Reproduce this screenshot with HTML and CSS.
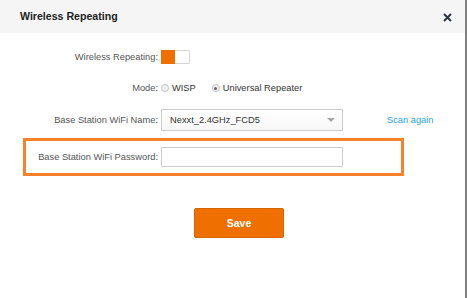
FILE: index.html
```html
<!DOCTYPE html>
<html lang="en">
<head>
    <meta charset="UTF-8">
    <meta name="viewport" content="width=device-width, initial-scale=1.0">
    <title>Wireless Repeating</title>
    <link rel="stylesheet" href="styles.css">
</head>
<body>
    <div class="dialog">
        <div class="dialog-header">
            <div class="dialog-title">Wireless Repeating</div>
            <svg class="close" width="9" height="9" viewBox="0 0 9 9">
                <path d="M1 1 L8 8 M8 1 L1 8" stroke="#2f3640" stroke-width="2" fill="none"/>
            </svg>
        </div>

        <div class="dialog-body">
            <div class="row row-switch">
                <div class="label">Wireless Repeating:</div>
                <div class="switch">
                    <span class="switch-on"></span>
                    <span class="switch-off"></span>
                </div>
            </div>

            <div class="row row-mode">
                <div class="label">Mode:</div>
                <span class="radio"></span>
                <span class="radio-text">WISP</span>
                <span class="radio checked"></span>
                <span class="radio-text">Universal Repeater</span>
            </div>

            <div class="row row-ssid">
                <div class="label">Base Station WiFi Name:</div>
                <div class="select">
                    <span>Nexxt_2.4GHz_FCD5</span>
                    <span class="caret"></span>
                </div>
                <a class="scan" href="#">Scan again</a>
            </div>

            <div class="row row-pass">
                <div class="label">Base Station WiFi Password:</div>
                <div class="input"></div>
            </div>

            <div class="actions">
                <button class="btn-save">Save</button>
            </div>
        </div>
    </div>
</body>
</html>
```

FILE: styles.css
```css
:root {
    --orange: #ef6f00;
    --highlight: #f8812a;
    --label: #555555;
    --text: #333333;
    --border: #cccccc;
}

body {
    margin: 0;
    background-color: #ffffff;
    font-family: 'Liberation Sans', Arial, sans-serif;
    font-size: 9.3px;
    color: var(--text);
}

.dialog {
    width: 465px;
    height: 298px;
    border-right: 2px solid #808080;
    background-color: #ffffff;
}

.dialog-header {
    display: flex;
    align-items: center;
    justify-content: space-between;
    height: 33px;
    padding: 0 13px 0 20px;
    background-color: #f5f5f5;
}

.dialog-title {
    font-size: 10.6px;
    font-weight: bold;
    color: #222222;
    margin-top: -1px;
}

.close {
    display: block;
    margin-top: 1px;
}

.dialog-body {
    padding-top: 17px;
}

.row {
    display: flex;
    align-items: center;
}

.label {
    width: 161px;
    padding-right: 3px;
    text-align: right;
    color: var(--label);
    white-space: nowrap;
    box-sizing: border-box;
}

.row-switch {
    height: 14px;
}

.switch {
    display: flex;
    width: 29px;
    height: 14px;
    border: 1px solid #d6d6d6;
    border-radius: 1px;
    box-sizing: border-box;
}

.switch-on {
    width: 14px;
    margin: -1px 0 -1px -1px;
    background-color: var(--orange);
}

.switch-off {
    flex: 1;
    background-color: #ffffff;
}

.row-mode {
    height: 14px;
    margin-top: 17px;
}

.radio {
    width: 8px;
    height: 8px;
    border: 1px solid #c4c4c4;
    border-radius: 50%;
    background-color: #f0f0f0;
    box-sizing: border-box;
    position: relative;
}

.radio.checked {
    margin-left: 16px;
}

.radio.checked::after {
    content: '';
    position: absolute;
    left: 1.5px;
    top: 1.5px;
    width: 3px;
    height: 3px;
    border-radius: 50%;
    background-color: #666666;
}

.radio-text {
    margin-left: 3px;
    color: var(--text);
}

.row-ssid {
    height: 22px;
    margin-top: 14px;
}

.select {
    display: flex;
    align-items: center;
    justify-content: space-between;
    width: 182px;
    height: 22px;
    padding: 0 4px 0 8px;
    border: 1px solid var(--border);
    background: linear-gradient(#ffffff, #f7f7f7);
    box-sizing: border-box;
    color: var(--text);
}

.caret {
    width: 0;
    height: 0;
    border-left: 4px solid transparent;
    border-right: 4px solid transparent;
    border-top: 4px solid #a8a8a8;
    margin-right: 3px;
}

.scan {
    margin-left: 44px;
    color: #2ba3e3;
    text-decoration: none;
}

.row-pass {
    height: 38px;
    width: 381px;
    margin: 7px 0 0 23px;
    border: 3px solid var(--highlight);
    box-sizing: border-box;
}

.row-pass .label {
    width: 135px;
}

.input {
    width: 182px;
    height: 20px;
    border: 1px solid var(--border);
    border-radius: 1px;
    box-sizing: border-box;
    background-color: #ffffff;
}

.actions {
    display: flex;
    justify-content: center;
    margin-top: 32px;
    padding-left: 13px;
}

.btn-save {
    width: 90px;
    height: 30px;
    border: 1px solid #d86400;
    border-radius: 2px;
    background-color: var(--orange);
    color: #ffffff;
    font-family: 'Liberation Sans', Arial, sans-serif;
    font-size: 10.5px;
    font-weight: bold;
}
```
